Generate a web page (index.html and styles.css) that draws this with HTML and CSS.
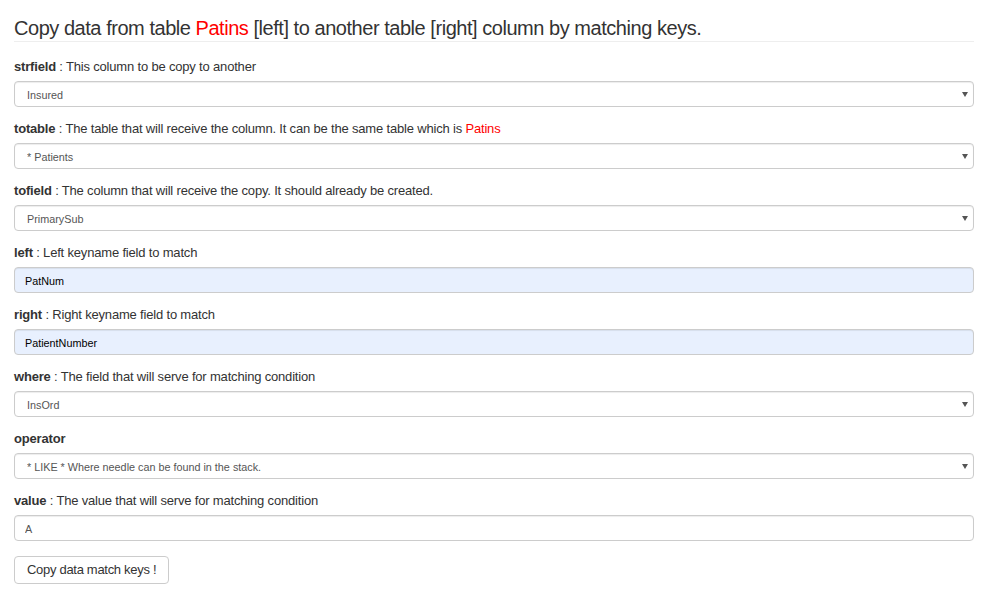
FILE: index.html
```html
<!DOCTYPE html>
<html>
<head>
<meta charset="utf-8">
<title>Copy data match keys</title>
<link rel="stylesheet" href="styles.css">
</head>
<body>
<div class="page">
  <h3 class="title">Copy data from table <span class="red">Patins</span> [left] to another table [right] column by matching keys.</h3>
  <form class="form">
    <div class="group">
      <label class="lbl"><b>strfield</b> : This column to be copy to another</label>
      <div class="sel-wrap"><select class="ctl"><option>Insured</option></select></div>
    </div>
    <div class="group">
      <label class="lbl"><b>totable</b> : The table that will receive the column. It can be the same table which is <span class="red">Patins</span></label>
      <div class="sel-wrap"><select class="ctl"><option>* Patients</option></select></div>
    </div>
    <div class="group">
      <label class="lbl"><b>tofield</b> : The column that will receive the copy. It should already be created.</label>
      <div class="sel-wrap"><select class="ctl"><option>PrimarySub</option></select></div>
    </div>
    <div class="group">
      <label class="lbl"><b>left</b> : Left keyname field to match</label>
      <input class="ctl inp auto" type="text" value="PatNum">
    </div>
    <div class="group">
      <label class="lbl"><b>right</b> : Right keyname field to match</label>
      <input class="ctl inp auto" type="text" value="PatientNumber">
    </div>
    <div class="group">
      <label class="lbl"><b>where</b> : The field that will serve for matching condition</label>
      <div class="sel-wrap"><select class="ctl"><option>InsOrd</option></select></div>
    </div>
    <div class="group">
      <label class="lbl"><b>operator</b></label>
      <div class="sel-wrap"><select class="ctl"><option>* LIKE * Where needle can be found in the stack.</option></select></div>
    </div>
    <div class="group last">
      <label class="lbl"><b>value</b> : The value that will serve for matching condition</label>
      <input class="ctl inp" type="text" value="A">
    </div>
    <button class="btn" type="button">Copy data match keys !</button>
  </form>
</div>
</body>
</html>
```

FILE: styles.css
```css
html, body {
  margin: 0;
  padding: 0;
  background: #fff;
}
body {
  font-family: "Liberation Sans", Arial, Helvetica, sans-serif;
  font-size: 13px;
  line-height: 20px;
  color: #333;
}
.page {
  width: 960px;
  margin-left: 14px;
}
.title {
  margin: 17px 0 0 0;
  font-size: 20px;
  line-height: 22px;
  letter-spacing: -0.46px;
  font-weight: normal;
  color: #333;
  padding-bottom: 2px;
  border-bottom: 1px solid #eee;
}
.red {
  color: #f00;
}
.form {
  margin-top: 15px;
  display: flex;
  flex-direction: column;
  align-items: flex-start;
}
.group {
  width: 100%;
  margin-bottom: 12px;
  display: flex;
  flex-direction: column;
}
.group.last {
  margin-bottom: 15px;
}
.lbl {
  display: block;
  font-size: 13px;
  line-height: 20px;
  letter-spacing: -0.18px;
  margin-bottom: 4px;
  font-weight: normal;
}
.lbl b {
  font-weight: bold;
}
.sel-wrap {
  position: relative;
  width: 100%;
}
.sel-wrap::after {
  content: "";
  position: absolute;
  right: 6px;
  top: 11px;
  width: 0;
  height: 0;
  border-left: 3px solid transparent;
  border-right: 3px solid transparent;
  border-top: 5px solid #555;
  pointer-events: none;
}
.ctl {
  display: block;
  box-sizing: border-box;
  width: 100%;
  height: 26px;
  margin: 0;
  border: 1px solid #ccc;
  border-radius: 4px;
  background: #fff;
  font-family: "Liberation Sans", Arial, Helvetica, sans-serif;
  font-size: 10.8px;
  color: #555;
  box-shadow: inset 0 1px 1px rgba(0, 0, 0, 0.075);
  outline: none;
}
select.ctl {
  -webkit-appearance: none;
  appearance: none;
  padding: 2px 20px 0 12px;
}
.inp {
  padding: 2px 10px 0 10px;
}
.inp.auto {
  background: #e8f0fe;
  color: #000;
}
.btn {
  box-sizing: border-box;
  height: 28px;
  padding: 3px 12px;
  border: 1px solid #ccc;
  border-radius: 4px;
  background: #fff;
  color: #333;
  font-family: "Liberation Sans", Arial, Helvetica, sans-serif;
  font-size: 13px;
  line-height: 20px;
  letter-spacing: -0.3px;
  cursor: pointer;
}
```
